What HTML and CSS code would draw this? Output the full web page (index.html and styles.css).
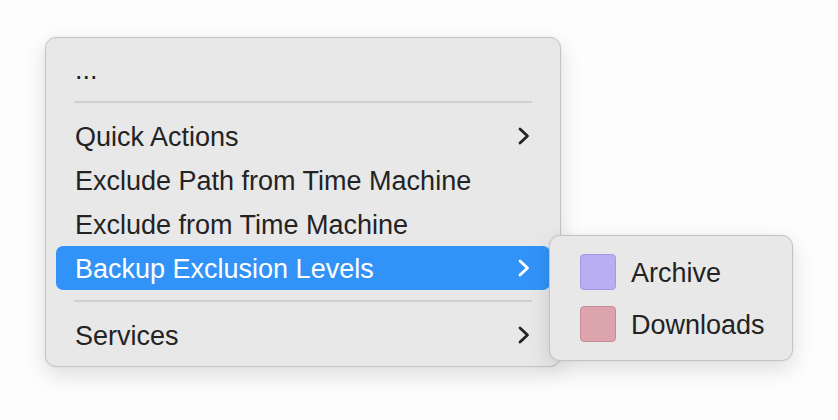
FILE: index.html
```html
<!DOCTYPE html>
<html>
<head>
<meta charset="utf-8">
<link rel="stylesheet" href="styles.css">
</head>
<body>
<div class="stage">
  <div class="menu">
    <div class="item">...</div>
    <div class="sep"></div>
    <div class="item"><span>Quick Actions</span><svg class="chev" viewBox="0 0 12 18"><path d="M2 2 L9.5 9 L2 16"/></svg></div>
    <div class="item"><span>Exclude Path from Time Machine</span></div>
    <div class="item"><span>Exclude from Time Machine</span></div>
    <div class="item active"><span>Backup Exclusion Levels</span><svg class="chev" viewBox="0 0 12 18"><path d="M2 2 L9.5 9 L2 16"/></svg></div>
    <div class="sep"></div>
    <div class="item"><span>Services</span><svg class="chev" viewBox="0 0 12 18"><path d="M2 2 L9.5 9 L2 16"/></svg></div>
  </div>
  <div class="submenu">
    <div class="subitem"><span class="swatch archive"></span><span class="label">Archive</span></div>
    <div class="subitem"><span class="swatch downloads"></span><span class="label">Downloads</span></div>
  </div>
</div>
</body>
</html>
```
FILE: styles.css
```css
html, body {
  margin: 0;
  padding: 0;
  background: #fdfdfd;
  width: 838px;
  height: 420px;
  overflow: hidden;
}
* { box-sizing: border-box; }
.stage {
  position: relative;
  padding: 37px 0 0 45px;
  font-family: "Liberation Sans", Arial, sans-serif;
  font-size: 27px;
  color: #232323;
}
.menu {
  width: 516px;
  padding: 9px 10px;
  background: #e8e8e8;
  border: 1px solid #c4c4c4;
  border-radius: 11px;
  box-shadow: 0 8px 22px rgba(0,0,0,0.13), 0 0 3px rgba(0,0,0,0.06);
}
.item {
  height: 44px;
  display: flex;
  align-items: center;
  justify-content: space-between;
  padding: 2px 20px 0 19px;
  border-radius: 7px;
}
.item.active {
  background: #3193f8;
  color: #fff;
}
.chev {
  width: 12px;
  height: 18px;
  margin-bottom: 2px;
  fill: none;
  stroke: #232323;
  stroke-width: 2.8;
  stroke-linecap: round;
  stroke-linejoin: round;
}
.active .chev { stroke: #fff; }
.sep {
  height: 2px;
  background: #d0d0d0;
  margin: 10px 18px 11px 18px;
}
.submenu {
  position: absolute;
  left: 549px;
  top: 235px;
  width: 244px;
  padding: 10px 0;
  background: #e8e8e8;
  border: 1px solid #c4c4c4;
  border-radius: 11px;
  box-shadow: 0 8px 22px rgba(0,0,0,0.13), 0 0 3px rgba(0,0,0,0.06);
}
.subitem {
  height: 52px;
  display: flex;
  align-items: center;
  padding-left: 30px;
}
.label {
  padding-top: 2px;
}
.swatch {
  width: 36px;
  height: 36px;
  border-radius: 4px;
  margin-right: 15px;
  flex: none;
}
.swatch.archive {
  background: #b9adf3;
  border: 1px solid #a597e4;
}
.swatch.downloads {
  background: #dca4ac;
  border: 1px solid #c78c95;
}
```
